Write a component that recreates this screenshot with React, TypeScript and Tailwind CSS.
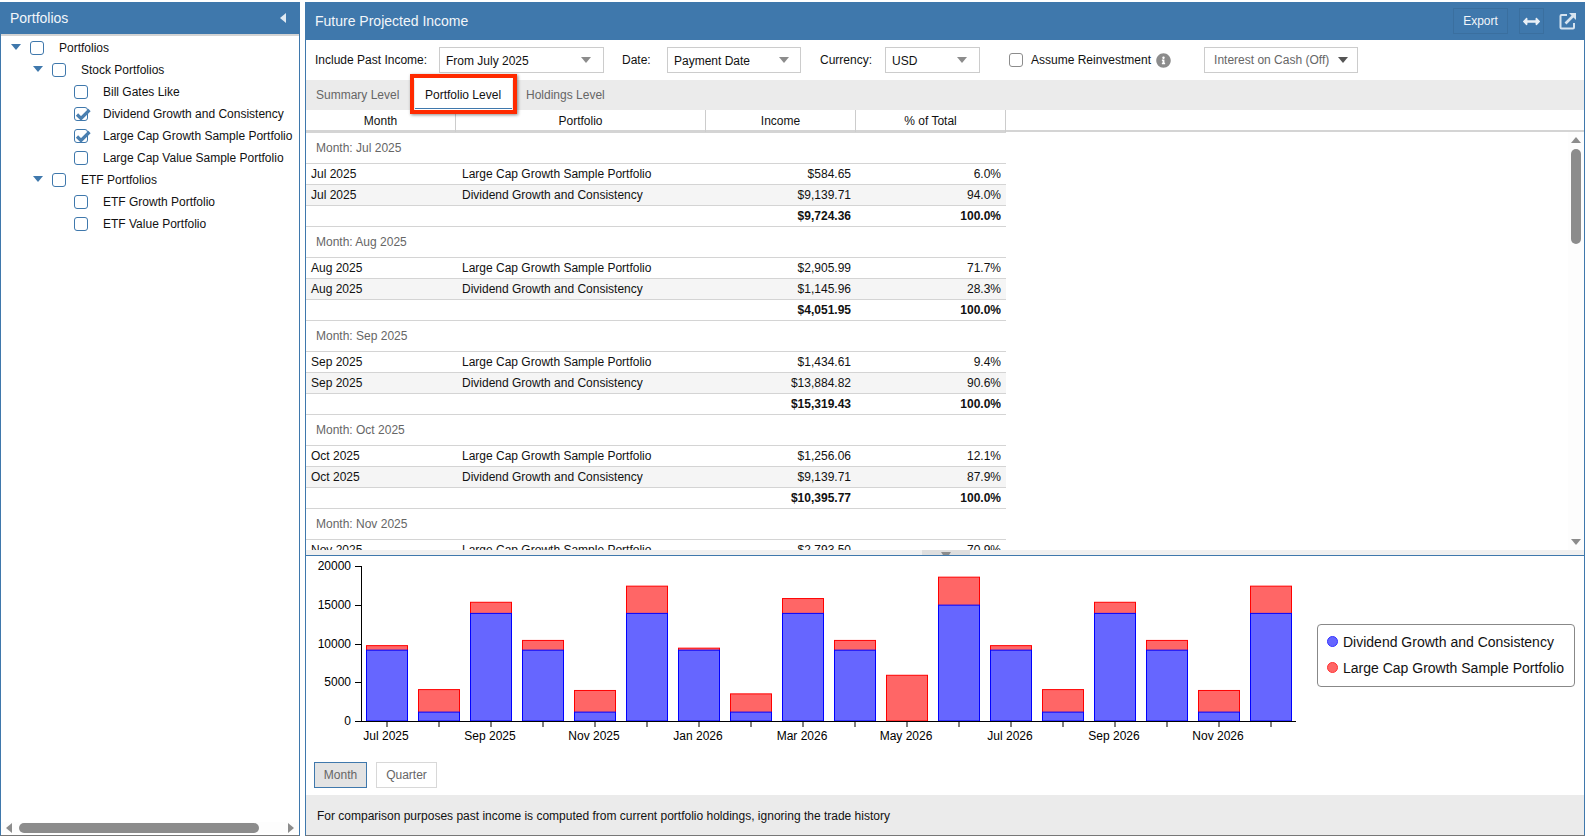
import { FaArrowsAltH, FaInfoCircle } from "react-icons/fa";

const tree = [
  { label: "Portfolios", level: 0, open: true, checked: false },
  { label: "Stock Portfolios", level: 1, open: true, checked: false },
  { label: "Bill Gates Like", level: 2, open: false, checked: false },
  { label: "Dividend Growth and Consistency", level: 2, open: false, checked: true },
  { label: "Large Cap Growth Sample Portfolio", level: 2, open: false, checked: true },
  { label: "Large Cap Value Sample Portfolio", level: 2, open: false, checked: false },
  { label: "ETF Portfolios", level: 1, open: true, checked: false },
  { label: "ETF Growth Portfolio", level: 2, open: false, checked: false },
  { label: "ETF Value Portfolio", level: 2, open: false, checked: false },
];

const LG = "Large Cap Growth Sample Portfolio";
const DG = "Dividend Growth and Consistency";

const groups = [
  { month: "Jul 2025", rows: [["$584.65", "6.0%"], ["$9,139.71", "94.0%"]], total: "$9,724.36" },
  { month: "Aug 2025", rows: [["$2,905.99", "71.7%"], ["$1,145.96", "28.3%"]], total: "$4,051.95" },
  { month: "Sep 2025", rows: [["$1,434.61", "9.4%"], ["$13,884.82", "90.6%"]], total: "$15,319.43" },
  { month: "Oct 2025", rows: [["$1,256.06", "12.1%"], ["$9,139.71", "87.9%"]], total: "$10,395.77" },
  { month: "Nov 2025", rows: [["$2,793.50", "70.9%"], ["$1,145.96", "29.1%"]], total: "$3,939.46" },
];

// [dividend, total] per month
const bars = [
  [9140, 9724], [1146, 4052], [13885, 15319], [9140, 10396], [1146, 3939], [13885, 17400],
  [9140, 9400], [1146, 3500], [13885, 15800], [9140, 10396], [0, 5900], [14950, 18560],
  [9140, 9724], [1146, 4052], [13885, 15319], [9140, 10396], [1146, 3939], [13885, 17400],
];
const xLabels: Record<number, string> = {
  0: "Jul 2025", 2: "Sep 2025", 4: "Nov 2025", 6: "Jan 2026", 8: "Mar 2026",
  10: "May 2026", 12: "Jul 2026", 14: "Sep 2026", 16: "Nov 2026",
};

function Check({ checked }: { checked?: boolean }) {
  return (
    <span className="relative block h-[14px] w-[14px] shrink-0 rounded-[3px] border-[1.5px] border-[#3f78ac] bg-white">
      {checked && (
        <svg viewBox="0 0 18 16" className="absolute left-[-1.5px] top-[-1.5px] h-[16px] w-[18px]">
          <path d="M3 7.500 L7 11.500 L15.500 3" fill="none" stroke="#4a7fb0" strokeWidth="3.200" />
        </svg>
      )}
    </span>
  );
}

function Select({ value, width, gap = "pr-[12px]" }: { value: string; width: string; gap?: string }) {
  return (
    <div className={`flex h-[26px] items-center justify-between border border-[#ccc] pl-[6px] ${gap} ${width}`}>
      <span className="pt-[2px]">{value}</span>
      <span className="h-0 w-0 border-x-[5px] border-t-[6px] border-x-transparent border-t-[#8c8c8c]" />
    </div>
  );
}

function Chart() {
  const ox = 306;
  const oy = 556;
  const y0 = 721 - oy;
  const sy = 155 / 20000;
  return (
    <svg width="1010" height="206" className="block shrink-0">
      {bars.map(([d, t], i) => {
        const x = 366.5 - ox + i * 52;
        return (
          <g key={i}>
            <rect x={x} y={y0 - t * sy} width={41} height={t * sy} fill="#ff6666" stroke="#ff0000" />
            {d > 0 && <rect x={x} y={y0 - d * sy} width={41} height={d * sy} fill="#6666ff" stroke="#0000ff" />}
          </g>
        );
      })}
      <path d={`M${355 - ox} ${y0 + 0.5}H${1296 - ox}M${361.5 - ox} ${566 - oy}V${y0}`} stroke="#000" fill="none" />
      {[0, 5000, 10000, 15000, 20000].map((v) => (
        <g key={v}>
          <path d={`M${355 - ox} ${Math.round(y0 - v * sy) + 0.5}H${361 - ox}`} stroke="#000" />
          <text x={351 - ox} y={y0 - v * sy + 4} textAnchor="end" fontSize="12" fill="#000">{v}</text>
        </g>
      ))}
      {bars.map((_, i) => {
        const x = 387 - ox + i * 52;
        return (
          <g key={i}>
            <path d={`M${x} ${y0}V${y0 + 6}`} stroke="#000" />
            {xLabels[i] && <text x={x - 1} y={y0 + 19} textAnchor="middle" fontSize="12" fill="#000">{xLabels[i]}</text>}
          </g>
        );
      })}
    </svg>
  );
}

export default function App() {
  return (
    <div className="flex h-[839px] w-[1586px] gap-[5px] overflow-hidden bg-white pb-[3px] pt-[2px] font-['Liberation_Sans',Arial,sans-serif] text-[12px] text-[#111]">
      {/* Portfolios tree */}
      <div className="flex w-[300px] flex-col border-x border-b border-x-[#3f78ac] border-b-[#777]">
        <div className="flex h-[32px] items-center justify-between bg-[#3f78ac] pl-[9px] pr-[13px] text-[14px] text-[#f2f6fa]">
          <span>Portfolios</span>
          <span className="h-0 w-0 border-y-[5px] border-r-[6px] border-y-transparent border-r-[#dfe9f2]" />
        </div>
        <div className="h-[2px] bg-[#d4d4d4]" />
        <div className="flex-1 pt-[1px]">
          {tree.map((n) => (
            <div key={n.label} className={`flex h-[22px] items-center ${n.level === 0 ? "pl-[10px]" : n.level === 1 ? "pl-[32px]" : "pl-[54px]"}`}>
              <span className="flex w-[19px] shrink-0">
                {n.open && <span className="mb-[3px] h-0 w-0 border-x-[5px] border-t-[6px] border-x-transparent border-t-[#3f78ac]" />}
              </span>
              <Check checked={n.checked} />
              <span className="ml-[15px] whitespace-nowrap">{n.label}</span>
            </div>
          ))}
        </div>
        <div className="mb-[2px] flex h-[11px] items-center bg-[#fdfdfd] pl-[5px] pr-[5px]">
          <span className="h-0 w-0 border-y-[5px] border-r-[6px] border-y-transparent border-r-[#8c8c8c]" />
          <span className="ml-[7px] h-[10px] w-[240px] rounded-full bg-[#8c8c8c]" />
          <span className="ml-auto h-0 w-0 border-y-[5px] border-l-[6px] border-y-transparent border-l-[#8c8c8c]" />
        </div>
      </div>

      {/* Main panel */}
      <div className="flex w-[1280px] flex-col border-x border-b border-x-[#3f78ac] border-b-[#777]">
        <div className="flex h-[38px] shrink-0 items-center bg-[#3f78ac] pl-[9px] pr-[7px] text-[14px] text-[#f2f6fa]">
          <span>Future Projected Income</span>
          <button className="ml-auto h-[26px] w-[55px] border border-[#3a6f9f] text-[12px] text-[#f2f6fa]">Export</button>
          <button className="ml-[11px] flex h-[26px] w-[25px] items-center justify-center border border-[#3a6f9f]">
            <FaArrowsAltH className="h-[17px] w-[17px] text-[#eaf0f6]" />
          </button>
          <svg viewBox="0 0 18 18" className="ml-[15px] h-[18px] w-[18px]" fill="none" stroke="#d6e3ef">
            <path d="M8 3H2.5A1 1 0 0 0 1.500 4V15.500A1 1 0 0 0 2.500 16.500H14A1 1 0 0 0 15 15.500V11" strokeWidth="2" />
            <path d="M6.500 11.500L15 3" strokeWidth="2.600" />
            <path d="M10 1H17V8Z" fill="#d6e3ef" stroke="none" />
          </svg>
        </div>

        {/* Filters */}
        <div className="flex h-[40px] shrink-0 items-center pl-[9px]">
          <span className="w-[124px]">Include Past Income:</span>
          <Select value="From July 2025" width="w-[165px]" />
          <span className="ml-[18px] w-[45px]">Date:</span>
          <Select value="Payment Date" width="w-[134px]" gap="pr-[11px]" />
          <span className="ml-[19px] w-[65px]">Currency:</span>
          <Select value="USD" width="w-[95px]" />
          <span className="ml-[29px]">
            <span className="block h-[14px] w-[14px] rounded-[3px] border-[1.5px] border-[#8c8c8c]" />
          </span>
          <span className="ml-[8px]">Assume Reinvestment</span>
          <FaInfoCircle className="ml-[5px] h-[15px] w-[15px] text-[#8c8c8c]" />
          <div className="ml-[33px] flex h-[26px] w-[154px] items-center justify-between border border-[#ccc] pl-[9px] pr-[9px] text-[#666]">
            <span>Interest on Cash (Off)</span>
            <span className="h-0 w-0 border-x-[5px] border-t-[6px] border-x-transparent border-t-[#555]" />
          </div>
        </div>

        {/* Tabs */}
        <div className="flex h-[30px] shrink-0 items-center bg-[#ebebeb] text-[#666]">
          <span className="ml-[10px] w-[99px]">Summary Level</span>
          <div className="relative flex h-[30px] w-[97px] items-center bg-white pl-[10px] text-[#111]">
            <div className="absolute inset-x-0 bottom-[1px] h-[1px] bg-[#3f78ac]" />
            <span>Portfolio Level</span>
            <div className="absolute inset-x-[-5px] bottom-[-4px] top-[-6px] border-x-[4px] border-b-[4px] border-t-[4px] border-[#ff2a00] shadow-[1px_1px_3px_rgba(0,0,0,0.45)]" />
          </div>
          <span className="ml-[14px]">Holdings Level</span>
        </div>

        {/* Column headers */}
        <div className="h-[22px] shrink-0 border-b-[2px] border-[#d4d4d4]">
          <div className="grid h-[20px] w-[700px] grid-cols-[150px_250px_150px_150px] text-center leading-[23px]">
            <div className="border-r border-[#ccc]">Month</div>
            <div className="border-r border-[#ccc]">Portfolio</div>
            <div className="border-r border-[#ccc]">Income</div>
            <div className="border-r border-[#ccc]">% of Total</div>
          </div>
        </div>

        {/* Table body */}
        <div className="relative min-h-0 flex-1 overflow-hidden">
          <div className="w-[700px] border-t border-[#d4d4d4]">
            {groups.map((g) => (
              <div key={g.month}>
                <div className="flex h-[31px] items-center border-b border-[#d4d4d4] pl-[10px] text-[#666]">Month: {g.month}</div>
                {g.rows.map((r, i) => (
                  <div key={i} className={`grid h-[21px] grid-cols-[150px_250px_150px_150px] items-center border-b border-[#d4d4d4] ${i === 1 ? "bg-[#f5f5f5]" : ""}`}>
                    <div className="pl-[5px]">{g.month}</div>
                    <div className="pl-[6px]">{i === 0 ? LG : DG}</div>
                    <div className="pr-[5px] text-right">{r[0]}</div>
                    <div className="pr-[5px] text-right">{r[1]}</div>
                  </div>
                ))}
                <div className="grid h-[21px] grid-cols-[150px_250px_150px_150px] items-center border-b border-[#d4d4d4] font-bold">
                  <div />
                  <div />
                  <div className="pr-[5px] text-right">{g.total}</div>
                  <div className="pr-[5px] text-right">100.0%</div>
                </div>
              </div>
            ))}
          </div>
          {/* vertical scrollbar */}
          <div className="absolute inset-y-0 right-0 flex w-[16px] flex-col items-center bg-[#fdfdfd] pt-[5px]">
            <span className="h-0 w-0 border-x-[5px] border-b-[6px] border-x-transparent border-b-[#8c8c8c]" />
            <span className="mt-[6px] h-[95px] w-[10px] rounded-full bg-[#8c8c8c]" />
            <span className="mb-[5px] mt-auto h-0 w-0 border-x-[5px] border-t-[6px] border-x-transparent border-t-[#8c8c8c]" />
          </div>
        </div>

        {/* Splitter */}
        <div className="flex h-[5px] shrink-0 items-end justify-center bg-[#f0f0f0]">
          <div className="ml-[1px] flex h-[5px] w-[48px] items-end justify-center bg-[#dedede]">
            <span className="h-0 w-[10px] border-x-[2px] border-t-[3px] border-x-transparent border-t-[#8c8c8c]" />
          </div>
        </div>
        <div className="h-[1px] shrink-0 bg-[#3f78ac]" />

        {/* Chart */}
        <div className="flex h-[206px] shrink-0">
          <Chart />
          <div className="ml-[1px] mt-[68px] flex h-[63px] w-[258px] flex-col justify-center gap-[12px] rounded-[4px] border border-[#888] pb-[2px] pl-[9px] text-[14px] leading-[14px]">
            <div className="flex items-center gap-[5px]"><span className="h-[11px] w-[11px] rounded-full border border-[#3333ff] bg-[#6666ff]" />{DG}</div>
            <div className="flex items-center gap-[5px]"><span className="h-[11px] w-[11px] rounded-full border border-[#ff3333] bg-[#ff6666]" />{LG}</div>
          </div>
        </div>

        {/* Period buttons */}
        <div className="flex h-[33px] shrink-0 items-start gap-[9px] pl-[8px] text-[#666]">
          <button className="h-[26px] w-[53px] border border-[#3f78ac] bg-[#e3e3e3]">Month</button>
          <button className="h-[26px] w-[61px] border border-[#d8d8d8]">Quarter</button>
        </div>

        <div className="flex h-[40px] shrink-0 items-center bg-[#ebebeb] pl-[11px] pt-[2px]">
          For comparison purposes past income is computed from current portfolio holdings, ignoring the trade history
        </div>
      </div>
    </div>
  );
}
